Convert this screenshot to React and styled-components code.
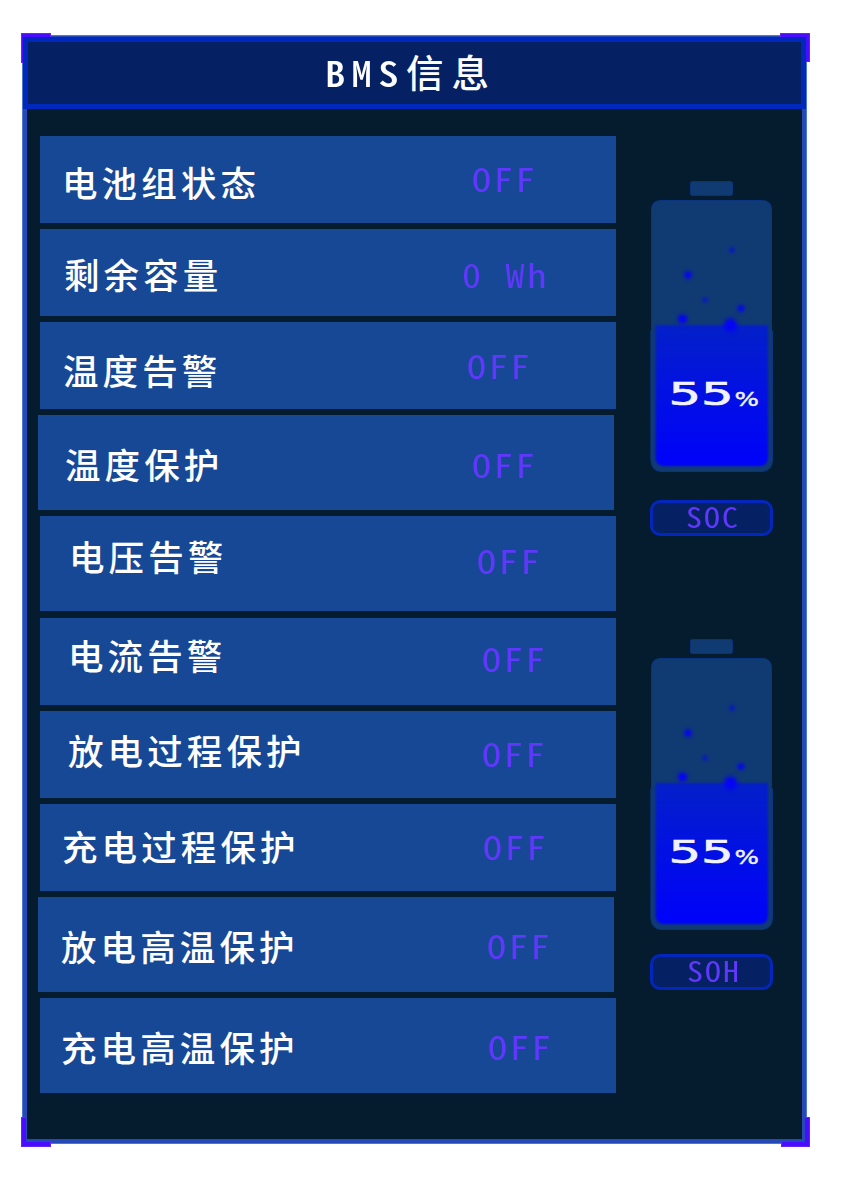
import React from 'react';
import styled, { createGlobalStyle } from 'styled-components';

const GlobalStyle = createGlobalStyle`
  * { box-sizing: border-box; }
  html, body { margin: 0; background: #fff; }
`;

const Page = styled.main`
  width: 860px;
  height: 1193px;
  padding: 35px 0 0 22px;
  overflow: hidden;
`;

const Panel = styled.section`
  position: relative;
  width: 785px;
  height: 1109px;
  padding: 1px 0 0;
  border: 1px solid #4d78cf;
  background: #2549b9;
`;

const Corner = styled.i`
  position: absolute;
  width: ${(p) => p.$w || 30}px;
  height: ${(p) => p.$h || 30}px;
  ${(p) => p.$v}: ${(p) => (p.$v === 'top' ? -3 : -4)}px;
  ${(p) => p.$side}: ${(p) => (p.$side === 'left' ? -2 : -4)}px;
  background: #6128f5;
  clip-path: ${(p) => p.$clip};

  &::before {
    content: '';
    position: absolute;
    inset: 1px;
    background: #4a0cff;
  }
`;

const Header = styled.header`
  position: relative;
  width: 783px;
  height: 72px;
  border: 5px solid #0028bd;
  background: #052163;
`;

const Title = styled.h1`
  margin: 9px 0 0 297px;
  display: flex;
  color: #fff;
  font: 500 37.5px/40px 'Noto Sans CJK SC', sans-serif;
  letter-spacing: 8px;
  white-space: nowrap;
`;

const TitleLatin = styled.span`
  width: 81px;
  font: 500 35.5px/42px 'Noto Sans CJK SC', sans-serif;
  font-feature-settings: 'hwid';
  letter-spacing: 5.6px;
  transform: scaleX(1.14);
  transform-origin: left;
`;

const Body = styled.div`
  position: relative;
  margin: 0 4px;
  height: 1030px;
  padding: 27px 0 0 13px;
  background: #051c2e;
  display: flex;
`;

const Rows = styled.div`
  width: 576px;
  display: flex;
  flex-direction: column;
`;

const Row = styled.div`
  display: grid;
  grid-template-columns: 400px 176px;
  width: 576px;
  height: ${(p) => p.$h}px;
  margin: 0 0 ${(p) => p.$gap || 6}px ${(p) => p.$shift || 0}px;
  background: #164896;
`;

const Label = styled.span`
  padding: ${(p) => p.$y - 2}px 0 0 ${(p) => p.$x}px;
  color: #fff;
  font: 500 35.5px/36px 'Noto Sans CJK SC', sans-serif;
  letter-spacing: 4.1px;
  white-space: nowrap;
`;

const Value = styled.span`
  margin: ${(p) => p.$y - 2}px 0 0 ${(p) => p.$x}px;
  color: #6038fc;
  font: 400 33px/36px 'Noto Sans CJK SC', sans-serif;
  font-feature-settings: 'hwid';
  letter-spacing: 2.3px;
  white-space: pre;
  transform: scaleX(1.155);
  transform-origin: left;
`;

const Gauges = styled.aside`
  margin-left: 34px;
  padding-top: 44px;
  width: 123px;
  display: flex;
  flex-direction: column;
`;

const BatterySvg = styled.svg`
  display: block;
  width: 123px;
  height: 292px;
`;

const Badge = styled.div`
  height: 36px;
  margin: ${(p) => p.$top}px 0 ${(p) => p.$bottom}px;
  padding-left: ${(p) => p.$x}px;
  border: 3px solid #0326bd;
  border-radius: 10px;
  background: #052163;
`;

const BadgeText = styled.span`
  display: block;
  color: #6038fc;
  font: 400 28px/27px 'Noto Sans CJK SC', sans-serif;
  font-feature-settings: 'hwid';
  letter-spacing: 1.8px;
  white-space: nowrap;
  transform: scaleX(1.14);
  transform-origin: left;
`;

const bubbles = [
  [82, 70, 2.2, 0.6],
  [38, 95, 3, 0.9],
  [55, 120, 2.2, 0.55],
  [91, 128.5, 2.8, 0.85],
  [32.5, 139, 3.6, 1],
  [80.5, 145, 5.2, 1],
];

function Battery({ id }) {
  return (
    <BatterySvg viewBox="0 0 123 292">
      <defs>
        <linearGradient id={`${id}-fill`} x1="0" y1="0" x2="0" y2="1">
          <stop offset="0" stopColor="#0420c8" />
          <stop offset="0.5" stopColor="#0210e4" />
          <stop offset="1" stopColor="#0002fa" />
        </linearGradient>
        <filter id={`${id}-soft`} x="-50%" y="-50%" width="200%" height="200%" colorInterpolationFilters="sRGB">
          <feGaussianBlur stdDeviation="0.8" />
        </filter>
        <filter id={`${id}-glow`} x="-100%" y="-100%" width="300%" height="300%" colorInterpolationFilters="sRGB">
          <feGaussianBlur stdDeviation="2.2" />
        </filter>
      </defs>
      <rect x="40.5" y="1.5" width="42" height="14" rx="2" fill="#103b72" stroke="#0c337a" />
      <path d="M1.5 30Q1.5 20.500 11 20.500H112Q121.500 20.500 121.500 30V150L122.500 151V280Q122 291 112 291.500H11Q1.500 291 .8 280V151L1.500 150Z" fill="#103b72" stroke="#0b3480" />
      <path d="M5.500 145H118V277Q118 286 109 286H14.500Q5.500 286 5.500 277Z" fill={`url(#${id}-fill)`} filter={`url(#${id}-soft)`} />
      {bubbles.map(([x, y, r, o]) => (
        <g key={x} fill="#0505f5" opacity={o}>
          <circle cx={x} cy={y} r={r * 1.5} opacity="0.55" filter={`url(#${id}-glow)`} />
          <circle cx={x} cy={y} r={r} filter={`url(#${id}-soft)`} />
        </g>
      ))}
      <g fill="#f0f2ff" stroke="#f0f2ff" fontFamily="'DejaVu Sans', sans-serif">
        <text x="0" y="0" fontSize="32" strokeWidth="0.7" transform="translate(18.500 225) scale(1.6 1)">55</text>
        <text x="0" y="0" fontSize="19.500" strokeWidth="0.4" transform="translate(84.500 225.500) scale(1.32 1)">%</text>
      </g>
    </BatterySvg>
  );
}

const rows = [
  { label: '电池组状态', h: 87, lx: 22, ly: 30, vx: 32, vy: 26 },
  { label: '剩余容量', h: 87, lx: 24, ly: 29, vx: 22, vy: 29, value: '0 Wh' },
  { label: '温度告警', h: 87, lx: 23, ly: 32, vx: 27, vy: 27 },
  { label: '温度保护', h: 95, lx: 27, ly: 33, vx: 34, vy: 33, shift: -2 },
  { label: '电压告警', h: 95, lx: 29, ly: 24, vx: 37, vy: 28, gap: 7 },
  { label: '电流告警', h: 87, lx: 28, ly: 21, vx: 42, vy: 24 },
  { label: '放电过程保护', h: 87, lx: 28, ly: 23, vx: 42, vy: 26 },
  { label: '充电过程保护', h: 87, lx: 22, ly: 26, vx: 43, vy: 26 },
  { label: '放电高温保护', h: 95, lx: 23, ly: 33, vx: 49, vy: 32, shift: -2 },
  { label: '充电高温保护', h: 95, lx: 21, ly: 33, vx: 48, vy: 32 },
];

export default function App() {
  return (
    <Page>
      <GlobalStyle />
      <Panel>
        <Corner $v="top" $side="left" $clip="polygon(0 0, 100% 0, 100% 4px, 3px 4px, 3px 100%, 0 100%)" />
        <Corner $v="top" $side="right" $h={29} $clip="polygon(0 0, 100% 0, 100% 100%, calc(100% - 4px) 100%, calc(100% - 4px) 4px, 0 4px)" />
        <Header>
          <Title>
            <TitleLatin>BMS</TitleLatin>信息
          </Title>
        </Header>
        <Body>
          <Rows>
            {rows.map((r) => (
              <Row key={r.label} $h={r.h} $gap={r.gap} $shift={r.shift}>
                <Label $x={r.lx} $y={r.ly}>{r.label}</Label>
                <Value $x={r.vx} $y={r.vy}>{r.value || 'OFF'}</Value>
              </Row>
            ))}
          </Rows>
          <Gauges>
            <Battery id="soc" />
            <Badge $top={28} $bottom={102} $x={33}><BadgeText>SOC</BadgeText></Badge>
            <Battery id="soh" />
            <Badge $top={24} $bottom={0} $x={34}><BadgeText>SOH</BadgeText></Badge>
          </Gauges>
        </Body>
        <Corner $v="bottom" $side="left" $clip="polygon(0 0, 5px 0, 5px calc(100% - 5px), 100% calc(100% - 5px), 100% 100%, 0 100%)" />
        <Corner $v="bottom" $side="right" $w={29} $clip="polygon(calc(100% - 5px) 0, 100% 0, 100% 100%, 0 100%, 0 calc(100% - 5px), calc(100% - 5px) calc(100% - 5px))" />
      </Panel>
    </Page>
  );
}
